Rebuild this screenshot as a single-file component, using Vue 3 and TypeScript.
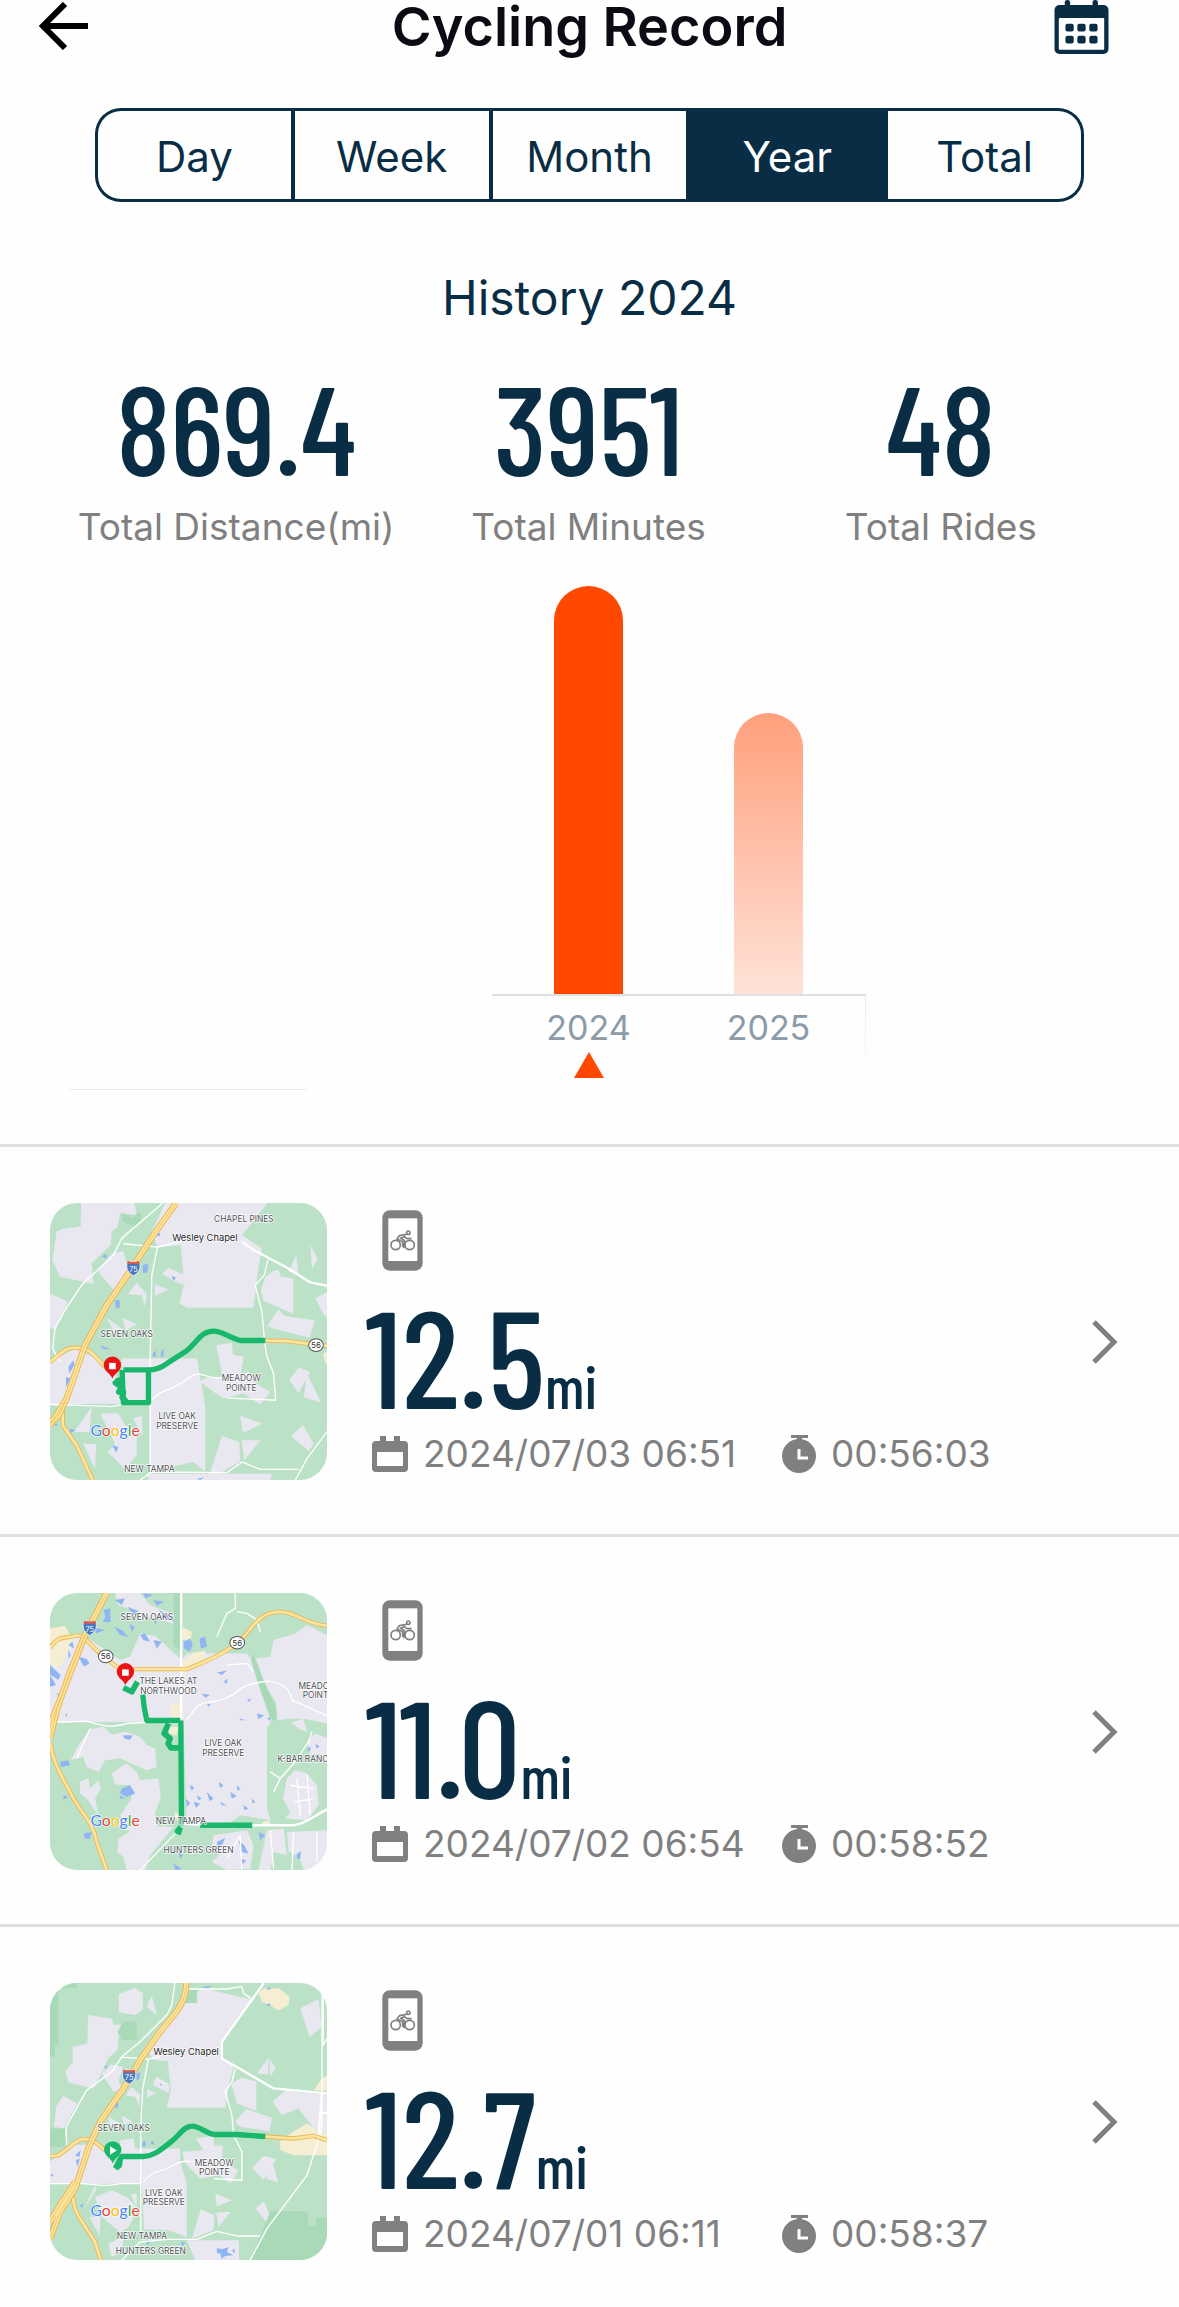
<script setup lang="ts">
import { computed, ref } from 'vue'

interface MapLabel { x: number; y: number; text: string; town?: boolean }
interface Shield { x: number; y: number; text: string }
interface RideMap {
  parks: string
  land: string
  sand: string
  water: string
  lanes: string
  streets: string
  highways: string
  interstate: string
  route: string
  routeThin: string
  interstateSign: Shield
  shields: Shield[]
  pin: { x: number; y: number; kind: 'stop' | 'start' }
  labels: MapLabel[]
}
interface Ride { id: number; miles: string; date: string; duration: string; map: RideMap }

const ranges = ['Day', 'Week', 'Month', 'Year', 'Total']
const range = ref('Year')

const years = [
  { year: 2024, distance: '869.4', minutes: 3951, rides: 48, height: 408 },
  { year: 2025, distance: '598.8', minutes: 2721, rides: 33, height: 281 },
]
const selectedYear = ref(2024)
const current = computed(() => years.find((y) => y.year === selectedYear.value) ?? years[0])
const stats = computed(() => [
  { value: current.value.distance, label: 'Total Distance(mi)' },
  { value: current.value.minutes, label: 'Total Minutes' },
  { value: current.value.rides, label: 'Total Rides' },
])

const rides: Ride[] = [
  {
    id: 1, miles: '12.5', date: '2024/07/03 06:51', duration: '00:56:03',
    map: {
      parks: 'M246 55L275 68L300 50L305 80L285 92L262 88L246 78Z',
      land: 'M123 24H283L290 60L240 55L232 95L215 110L212 150L190 170L155 205L160 267L60 245L37 195L50 110L68 102L122 94ZM375 24H682L605 120L665 160L655 215L640 338H440L418 325L432 265L422 150L352 158L335 110ZM175 230L215 175L250 168L265 225L225 290ZM30 295L84 320L45 400H30ZM367 235L385 218L432 240L430 270L400 258ZM262 298L290 262L320 298L314 335L305 300ZM344 268L386 284L344 302ZM199 368L245 400L240 412L222 410ZM247 368L292 388L256 405ZM662 285L676 245L700 228L715 225L722 245L759 250V356L670 318ZM682 392L714 342L732 362L823 375L808 428L700 400ZM746 230L768 178L774 238ZM810 150L832 190L815 222ZM825 310L861 290V368L848 355ZM30 500L105 460L190 500L230 545L265 625L30 627ZM245 490H470L480 545L495 630V830L460 800L330 828V625H252ZM252 530H318V612H262ZM528 450L575 443L578 478L610 485L602 535L625 530L640 560L690 590L660 628L610 595L548 610L480 560L500 545L548 550ZM747 555L775 518L810 530L775 593ZM800 535L842 622L790 606ZM600 662L666 685L608 713ZM605 735L661 735L612 795ZM508 838L545 722L597 740L600 798L520 845ZM752 722L788 690L820 745L806 768ZM102 710L155 635L148 710ZM180 655H235L255 690L290 700V780L255 822L203 770L225 745ZM278 668L305 662L308 724ZM130 745L168 748L165 822ZM320 835H695L690 854H325Z',
      sand: 'M848 475L861 470V510L852 495Z',
      water: 'M308 210L324 206L322 232L308 234ZM352 112L360 115L358 124L350 122ZM226 315H239V338H226ZM185 184L198 175L201 190ZM394 242L408 248L400 258ZM180 450L212 462L190 462ZM85 515L100 495L104 508L88 535ZM78 545L92 550L78 576ZM340 472L346 465L347 484H337ZM363 470L370 460V484H362ZM216 750L235 755L228 772ZM90 700L106 706L90 714ZM40 688L52 684V694ZM470 850L492 846L480 854Z',
      lanes: 'M368 24L245 130L220 180L125 270L75 345L45 400L38 460L60 500M250 146L352 156L335 240L330 500V830M352 156L425 138M683 195L672 240L645 270L665 350L673 440L680 485L700 535L706 615L560 608M335 615C370 575 395 590 440 552S500 560 550 545M30 627C110 632 170 630 215 634L255 625M300 854L335 830L560 832L605 800L660 822H775M765 854L800 790L861 708',
      streets: 'M605 140L640 165L735 215L810 262L861 272',
      highways: 'M30 500C60 480 75 455 105 458C150 455 160 480 200 520M675 436L740 438L861 452M68 625V690L110 750L158 854',
      interstate: 'M408 24L340 120L262 240L200 330L135 450L80 610L30 690M78 612L56 662L30 682',
      route: 'M675 436H600C570 428 545 408 520 408C480 408 470 445 435 470L380 505C360 520 345 524 325 524H250M325 524V622H250L246 524',
      routeThin: 'M232 548L236 560L226 563L244 575L236 590L250 592L246 606L258 618',
      interstateSign: { x: 280, y: 218, text: '75' },
      shields: [{ x: 827, y: 450, text: '56' }],
      pin: { x: 217, y: 512, kind: 'stop' },
      labels: [
        { x: 611, y: 82, text: 'CHAPEL PINES' }, { x: 494, y: 138, text: 'Wesley Chapel', town: true },
        { x: 260, y: 425, text: 'SEVEN OAKS' }, { x: 603, y: 558, text: 'MEADOW' }, { x: 603, y: 586, text: 'POINTE' },
        { x: 411, y: 672, text: 'LIVE OAK' }, { x: 411, y: 700, text: 'PRESERVE' }, { x: 328, y: 831, text: 'NEW TAMPA' },
      ],
    },
  },
  {
    id: 2, miles: '11.0', date: '2024/07/02 06:54', duration: '00:58:52',
    map: {
      parks: 'M640 205L668 280L708 370L708 410L690 400L655 300L632 225ZM400 24H425V200L400 180Z',
      land: 'M30 180L130 150L240 225L270 215L300 145L345 152L425 225L440 205H620L640 230L660 300L700 395L680 430V670L690 705L600 690L560 720H440L430 420L320 410L30 412ZM225 24H300L330 60L405 90V118L330 95L300 110L275 75L235 60ZM700 165L765 145L800 120L861 150V415L800 402L750 400L712 405L706 350L668 290L640 220L690 215ZM95 520L115 480L150 432L190 425L215 448L258 440L300 455L320 480L345 490L350 545L320 555L240 520L195 525L175 560L140 545L130 515L90 525ZM215 565L258 535L290 560L300 585L355 580L362 640L345 680L350 720L330 760L260 735L240 690L275 640L270 600L225 598ZM120 590L145 578L150 610L175 585L182 610L165 640L175 690L140 640L120 625ZM235 760L300 720L400 725L330 810L315 854H260L250 815L232 800ZM520 750L620 735L640 780L630 850L560 854L515 830L545 800L515 785ZM680 735L730 730L740 810L700 800L690 854H655ZM740 740L861 735V854H790L775 810L745 800ZM728 640L740 580L765 555L800 565L830 600L835 660L800 705L735 700L750 680ZM800 470L825 445L861 460V530L835 505L810 510ZM752 412L790 402L800 440L775 430Z',
      sand: 'M30 130L75 122L98 165L65 240L45 250L30 235ZM428 127L455 140L452 165H426ZM425 235L460 202L497 198L490 225L425 270ZM392 355L425 352V400L388 395ZM385 425H418L408 452L388 445ZM405 680L425 690L415 705L402 700ZM665 710L690 705L686 722L668 720Z',
      water: 'M190 75L210 70L212 112L188 110L196 95ZM165 128L195 135L168 145ZM225 45L255 40L245 60ZM262 65L295 78L290 95L275 85ZM310 25L340 30L315 40ZM340 45L372 50L350 62ZM355 75L390 90L405 110L380 102ZM340 100L352 105L345 118ZM222 125L245 135L265 155L240 150ZM268 118L285 125L275 140ZM300 150L315 145L330 170L310 165ZM340 165L365 170L350 190ZM430 170L450 160L458 180L448 200L432 190ZM478 160L495 155L500 185L482 190ZM115 215L140 222L148 235L132 244ZM85 180L97 170L102 190ZM30 240L62 270L55 285L30 268ZM30 270L48 300L30 305ZM50 325L75 330L60 342ZM75 390L82 385L80 395ZM85 195L92 210L85 222ZM250 450L278 450L270 464L252 460ZM60 530L85 525L90 540L62 545ZM245 610L270 600L285 625L260 635L240 625ZM238 630L258 640L240 640ZM70 630L85 636L70 642ZM130 745L155 740L150 760H135ZM530 262L560 256L545 270ZM550 290L562 280L560 296ZM485 325L510 330L495 338ZM598 400L618 405H600ZM650 385L672 390L655 402ZM680 400L690 396V408ZM500 355L512 358L505 365ZM620 345L632 340L628 350ZM448 600L462 605L455 618ZM500 620L520 640L508 648ZM535 590L550 600L540 608ZM570 620L590 632L575 640ZM590 600L600 610L592 618ZM460 650L480 655L468 668ZM635 640L645 650L636 655ZM540 650L560 660H545ZM470 630L485 640L475 645ZM438 640L450 655L440 665ZM610 660L625 670L612 675ZM530 770L555 758L545 780L532 785ZM595 765L612 780L625 805L605 800ZM655 740L675 750L660 765ZM600 820L618 825L605 840ZM770 805L782 798L780 820H770ZM415 800L428 810L420 820ZM800 490L812 485L808 500ZM825 475L838 485L828 490ZM400 835L425 850L405 854Z',
      lanes: 'M584 24L586 70L560 85L545 120L530 155M590 80L620 85L650 105L660 140M30 412L140 408C200 428 220 425 260 415L400 407M440 404C460 385 460 360 500 352C540 350 560 338 580 328C620 290 650 295 680 288C720 290 750 310 755 345L790 360L861 392M300 854L420 730M700 620L720 580L690 560M720 580L760 535L805 470L815 440M150 430L110 520M560 240L620 235L640 260M750 600L820 610M760 650L820 640M770 580L780 690M800 570L810 690M560 820L600 750L605 854M690 735L700 850M760 740L755 854M830 740V830',
      streets: 'M423 24V400M425 715L520 720H760C800 715 820 690 861 672',
      highways: 'M30 190C50 150 80 160 105 152C130 145 150 180 180 205L235 250M280 252H440C500 230 540 210 585 180C620 155 640 105 680 88C750 60 790 120 861 122M30 470C40 540 70 580 95 630C120 680 160 710 170 770L200 854',
      interstate: 'M200 24L135 150L90 260L52 370L30 460M135 150L42 390L30 420',
      route: 'M308 328L312 365L320 406H420M422 406L424 720M480 720H636',
      routeThin: 'M250 308L275 320L292 290M385 415L372 445L390 460L384 475L392 488L420 488M422 725L412 738L424 742',
      interstateSign: { x: 149, y: 127, text: '75' },
      shields: [{ x: 197, y: 214, text: '56' }, { x: 591, y: 173, text: '56' }],
      pin: { x: 256, y: 262, kind: 'stop' },
      labels: [
        { x: 320, y: 104, text: 'SEVEN OAKS' }, { x: 385, y: 298, text: 'THE LAKES AT' }, { x: 385, y: 326, text: 'NORTHWOOD' },
        { x: 833, y: 312, text: 'MEADOW' }, { x: 833, y: 339, text: 'POINTE' }, { x: 549, y: 483, text: 'LIVE OAK' },
        { x: 549, y: 511, text: 'PRESERVE' }, { x: 797, y: 531, text: 'K-BAR RANCH' }, { x: 422, y: 715, text: 'NEW TAMPA' },
        { x: 475, y: 804, text: 'HUNTERS GREEN' },
      ],
    },
  },
  {
    id: 3, miles: '12.7', date: '2024/07/01 06:11', duration: '00:58:37',
    map: {
      parks: 'M30 24H110V40H55V210H45V245H30ZM30 460H75V515H30ZM690 708H804V750H827V728H861V854H630ZM435 45H470V84H435ZM250 140H290V195H245L232 170Z',
      land: 'M144 120L215 130L220 148L270 150L272 178L235 185L232 225L205 248L190 285L160 340L85 322L76 290L98 262V215L142 205ZM236 58L285 38L308 55V105L285 120L236 112ZM320 95L335 62L350 120ZM430 84H470V50L490 40L640 75L655 55L545 195L540 245L580 275L565 330L556 398H380L392 345L383 258L340 255L315 215L360 160L410 115ZM780 100L835 72L843 155L808 186ZM185 295L212 268L248 275L235 320L250 340L220 350ZM340 320L350 305L388 328L386 354L340 330ZM258 362L272 335L300 358L298 395L285 365ZM320 343L347 353L322 367ZM48 395L70 362L112 385L70 460L42 455ZM205 425L240 445L210 452ZM245 422L278 438L252 448ZM573 325L605 307L648 320V407L590 385ZM585 440L617 402L695 428L688 468L600 455ZM650 295L685 248L684 298ZM688 250L706 280L690 305ZM697 380L735 345L780 352L861 358V475L820 460L775 400L725 420ZM85 512L175 505L240 590L290 625L30 627V560ZM240 495L280 490L285 520H420V560L440 625V785L385 765L312 762L305 625H240ZM468 490L520 482L522 510L548 512L545 560L595 585L570 625L540 600L480 610L432 560L428 530L490 525ZM635 578L670 542L708 552L670 614ZM695 555L714 622L678 610ZM525 655L574 675L530 694ZM528 712L570 710L535 755ZM455 790L482 702L522 720L520 765ZM645 700L672 679L693 735L680 742ZM132 700L165 632L168 645ZM165 665L215 645L260 665L285 690L290 710L265 755L240 770L185 725ZM272 658L290 655V695ZM148 725H182L178 780ZM205 805L255 780L240 830L215 845ZM440 795H596V854H465Z',
      sand: 'M672 40L715 40L748 65L745 90L715 106L690 92L665 80L655 55ZM718 500L750 475L800 445L830 465L861 475V540H760L720 525ZM845 310L861 300V348L820 345Z',
      water: 'M485 35L515 33L500 42ZM680 38L695 40L682 45ZM675 90L690 85V93ZM288 295L300 292L298 312L290 316ZM225 378L234 375V397H224ZM192 275L200 270L201 282ZM105 540L122 525L118 545ZM108 555L120 550L112 575ZM308 500L316 495V514H306ZM330 503L340 497L342 510ZM118 690L132 685L125 698ZM30 600L42 595L38 604ZM530 818L545 822L565 815L560 830L580 840L555 842L545 850L540 835L530 832ZM575 825L584 820L583 835ZM420 802L436 800L428 812ZM318 795L330 800L322 810ZM358 325L366 328L362 333Z',
      lanes: 'M404 24L395 90L380 120L300 200L245 245L215 290L140 345L78 455L80 510M245 246L325 252L308 340L302 450V790M325 252L360 245M435 42H560L605 34L610 55L640 75M585 280L575 320L555 350L575 420L580 480L605 530V615L520 610M30 625H130C190 632 210 632 240 625H300M310 620C340 580 360 595 400 570S460 570 500 555M245 854L300 800L380 792H470L530 768L590 782H660M630 854L680 760L770 640L800 600L845 460V24M850 24L848 210L861 190',
      streets: 'M671 24L545 200V250L640 305L700 340L861 355M845 355L835 480M845 413H861',
      highways: 'M30 542H50C80 530 100 495 130 492C160 490 170 505 195 525M675 484L760 490L820 482L861 495M98 640C95 690 110 720 130 745L165 800L182 854',
      interstate: 'M438 24C438 90 400 120 360 170L300 255L250 340L180 440L145 520L105 640L60 710L30 790M105 620L60 690L30 740',
      route: 'M675 484L590 478H520C495 472 475 452 455 453C430 453 420 480 390 502C360 525 340 543 310 544H245L226 580',
      routeThin: 'M225 578L238 570L240 550',
      interstateSign: { x: 267, y: 303, text: '75' },
      shields: [],
      pin: { x: 218, y: 526, kind: 'start' },
      labels: [
        { x: 438, y: 241, text: 'Wesley Chapel', town: true }, { x: 251, y: 468, text: 'SEVEN OAKS' },
        { x: 522, y: 571, text: 'MEADOW' }, { x: 522, y: 598, text: 'POINTE' }, { x: 371, y: 662, text: 'LIVE OAK' },
        { x: 371, y: 690, text: 'PRESERVE' }, { x: 305, y: 790, text: 'NEW TAMPA' }, { x: 332, y: 837, text: 'HUNTERS GREEN' },
      ],
    },
  },
]
</script>

<template>
  <main class="page">
    <header class="topbar">
      <button class="icon-button" type="button" aria-label="Back">
        <svg class="back" viewBox="0 0 50 48" aria-hidden="true">
          <path d="M26 2L4 24L26 46M5 24H49" fill="none" stroke="#000" stroke-width="6" />
        </svg>
      </button>
      <h1>Cycling Record</h1>
      <button class="icon-button" type="button" aria-label="Calendar">
        <svg class="calendar" viewBox="70 0 165 163" aria-hidden="true">
          <rect x="71" y="15" width="163" height="148" rx="15" fill="#082d45" />
          <rect x="102" y="0" width="16" height="26" rx="7" fill="#082d45" />
          <rect x="186" y="0" width="16" height="26" rx="7" fill="#082d45" />
          <rect x="84" y="54" width="137" height="96" rx="3" fill="#fff" />
          <g fill="#082d45">
            <rect v-for="i in 6" :key="i" :x="104 + ((i - 1) % 3) * 36" :y="i > 3 ? 108 : 72" width="25" height="23" rx="6" />
          </g>
        </svg>
      </button>
    </header>

    <div class="tabs" role="group" aria-label="Period">
      <button v-for="name in ranges" :key="name" type="button" :class="{ active: name === range }" :aria-pressed="name === range" @click="range = name">{{ name }}</button>
    </div>

    <h2>History {{ selectedYear }}</h2>

    <dl class="stats">
      <div v-for="stat in stats" :key="stat.label">
        <dd>{{ stat.value }}</dd>
        <dt>{{ stat.label }}</dt>
      </div>
    </dl>

    <section class="chart" aria-label="Distance by year">
      <div class="plot">
        <div v-for="y in years" :key="y.year" class="slot">
          <div class="bar" :class="{ active: y.year === selectedYear }" :style="{ height: y.height + 'px' }"></div>
        </div>
      </div>
      <div class="axis">
        <button v-for="y in years" :key="y.year" type="button" class="slot" @click="selectedYear = y.year">
          <span>{{ y.year }}</span>
          <svg v-if="y.year === selectedYear" class="marker" viewBox="0 0 30 26" aria-hidden="true"><path d="M15 0L30 26H0Z" fill="#ff4900" /></svg>
        </button>
      </div>
    </section>
    <div class="hint"></div>

    <ul class="rides">
      <li v-for="ride in rides" :key="ride.id">
        <a href="#">
          <svg class="map" viewBox="30 24 830 830" role="img" aria-label="Route map">
            <rect x="30" y="24" width="830" height="830" fill="#bbe2c7" />
            <path :d="ride.map.land" fill="#e9e8f0" />
            <path :d="ride.map.parks" fill="#a9dab8" />
            <path :d="ride.map.sand" fill="#f5eed2" />
            <path :d="ride.map.water" fill="#90b5f3" />
            <g fill="none" stroke-linejoin="round">
              <path :d="ride.map.lanes" stroke="#fff" stroke-width="4" />
              <path :d="ride.map.streets" stroke="#fff" stroke-width="7" />
              <path :d="ride.map.highways" stroke="#eeb355" stroke-width="13" />
              <path :d="ride.map.highways" stroke="#fbe69d" stroke-width="8" />
              <path :d="ride.map.interstate" stroke="#eeb355" stroke-width="19" />
              <path :d="ride.map.interstate" stroke="#fbe69d" stroke-width="13" />
              <path :d="ride.map.interstate" stroke="#eeb355" stroke-width="2" />
              <path :d="ride.map.route" stroke="#19b76b" stroke-width="16" />
              <path :d="ride.map.routeThin" stroke="#19b76b" stroke-width="17" />
            </g>
            <g :transform="`translate(${ride.map.interstateSign.x} ${ride.map.interstateSign.y})`">
              <path d="M-17 -20Q0 -15 17 -20Q28 10 0 24Q-28 10 -17 -20Z" fill="#4777bd" stroke="#fff" stroke-width="2" />
              <path d="M-17 -20Q0 -15 17 -20L19 -11H-19Z" fill="#d95b50" />
              <text class="sign light" y="13">{{ ride.map.interstateSign.text }}</text>
            </g>
            <g v-for="(s, i) in ride.map.shields" :key="i" :transform="`translate(${s.x} ${s.y})`">
              <ellipse rx="22" ry="19" fill="#fff" stroke="#555" stroke-width="3" />
              <text class="sign" y="9">{{ s.text }}</text>
            </g>
            <text v-for="l in ride.map.labels" :key="l.text" :class="l.town ? 'town' : 'place'" :x="l.x" :y="l.y">{{ l.text }}</text>
            <text class="google" x="151" y="721"><tspan fill="#4285f4">G</tspan><tspan fill="#ea4335">o</tspan><tspan fill="#fbbc05">o</tspan><tspan fill="#4285f4">g</tspan><tspan fill="#34a853">l</tspan><tspan fill="#ea4335">e</tspan></text>
            <g :transform="`translate(${ride.map.pin.x} ${ride.map.pin.y})`">
              <path d="M0 38C-6 22 -26 16 -26 -2A26 26 0 0 1 26 -2C26 16 6 22 0 38Z" :fill="ride.map.pin.kind === 'stop' ? '#ea1414' : '#19b76b'" />
              <rect v-if="ride.map.pin.kind === 'stop'" x="-10" y="-9" width="20" height="19" fill="#fff" />
              <path v-else d="M-8 -13L12 0L-8 13Z" fill="#fff" />
            </g>
          </svg>

          <div class="info">
            <svg class="device" viewBox="66 30 123 183" aria-hidden="true">
              <rect x="67" y="31" width="121" height="181" rx="22" fill="#808080" />
              <rect x="85" y="55" width="87" height="128" fill="#fff" />
              <g fill="none" stroke="#808080" stroke-width="5" stroke-linejoin="round">
                <circle cx="107" cy="135" r="14" />
                <circle cx="149" cy="135" r="14" />
                <circle cx="145" cy="98" r="5" />
                <path d="M140 103L118 107L111 117L128 125V138L132 142L134 122L122 115L133 110L141 116H155" />
              </g>
            </svg>
            <p class="miles"><strong>{{ ride.miles }}</strong><span>mi</span></p>
            <div class="meta">
              <span class="when">
                <svg class="date-icon" viewBox="0 0 36 36" aria-hidden="true">
                  <path d="M8 0h6v5h8V0h6v5h4q4 0 4 4v23q0 4 -4 4H4q-4 0 -4 -4V9q0 -4 4 -4h4ZM5 16v14h26V16Z" fill="#808080" fill-rule="evenodd" />
                </svg>
                <time>{{ ride.date }}</time>
              </span>
              <span class="time">
                <svg class="watch-icon" viewBox="0 0 34 38" aria-hidden="true">
                  <path d="M9 0H26V3H20V6H15V3H9Z" fill="#808080" />
                  <circle cx="17" cy="21" r="17" fill="#808080" />
                  <path d="M17 14V23H26" fill="none" stroke="#fff" stroke-width="3" />
                </svg>
                <time>{{ ride.duration }}</time>
              </span>
            </div>
          </div>

          <svg class="chevron" viewBox="0 0 26 44" aria-hidden="true">
            <path d="M2 2L22 22L2 42" fill="none" stroke="#808080" stroke-width="5" />
          </svg>
        </a>
      </li>
    </ul>
  </main>
</template>

<style>
body {
  background: #fefefe;
}
</style>

<style scoped>
.page {
  font-family: Inter, Roboto, sans-serif;
  color: #082d45;
}
button {
  margin: 0;
  padding: 0;
  border: 0;
  background: none;
  font: inherit;
  color: inherit;
  cursor: pointer;
}
svg {
  display: block;
  flex: none;
}
.topbar {
  display: flex;
  justify-content: space-between;
  height: 54px;
  padding: 0 70px 0 39px;
}
.icon-button {
  display: flex;
  flex: 1;
}
.icon-button:last-child {
  justify-content: flex-end;
}
.back {
  width: 50px;
  height: 48px;
  margin-top: 2px;
}
.calendar {
  width: 55px;
  height: 54px;
}
h1 {
  margin: 0 0 0 31px;
  font-size: 54px;
  line-height: 54px;
  font-weight: 600;
  color: #0b0b14;
}
.tabs {
  display: flex;
  height: 94px;
  margin: 54px 95px 0;
}
.tabs button {
  box-sizing: border-box;
  width: 20%;
  padding-top: 2px;
  font-size: 42px;
  border: 3px solid #082d45;
  border-width: 3px 2px;
}
.tabs button:first-child {
  border-left-width: 3px;
  border-radius: 26px 0 0 26px;
}
.tabs button:last-child {
  border-right-width: 3px;
  border-radius: 0 26px 26px 0;
}
.tabs .active {
  background: #082d45;
  color: #fff;
}
h2 {
  margin: 67px 0 0;
  text-align: center;
  font-size: 48px;
  line-height: 58px;
  font-weight: 400;
}
.stats {
  display: flex;
  margin: 49px 62px 0 60px;
}
.stats div {
  display: flex;
  flex: 1 1 0;
  flex-direction: column;
  text-align: center;
}
.stats dd {
  margin: 0;
  font-family: 'Barlow Condensed', 'Roboto Condensed', sans-serif;
  font-size: 126px;
  line-height: 100px;
  font-weight: 500;
}
.stats dt {
  margin-top: 29px;
  font-size: 37px;
  line-height: 44px;
  color: #808080;
}
.chart {
  width: 374px;
  margin-left: calc(50% - 98px);
}
.plot {
  display: flex;
  align-items: flex-end;
  height: 445px;
  padding-left: 7px;
  border-bottom: 2px solid #dfdfe1;
}
.slot {
  display: flex;
  flex-direction: column;
  align-items: center;
  width: 180px;
}
.bar {
  width: 69px;
  border-radius: 35px 35px 0 0;
  background: linear-gradient(#ffa07c, #ffe2d8);
}
.bar.active {
  background: #ff4900;
}
.axis {
  display: flex;
  align-items: flex-start;
  height: 82px;
  padding-left: 7px;
  background: linear-gradient(#ececee, #f6f6f6) right top / 1px 60px no-repeat;
}
.axis span {
  margin-top: 12px;
  font-size: 34px;
  line-height: 40px;
  color: #8b9ba8;
}
.marker {
  width: 30px;
  height: 26px;
  margin-top: 4px;
}
.hint {
  width: 237px;
  height: 1px;
  margin: 11px 0 54px 70px;
  background: #e9e9e9;
}
.rides {
  margin: 0;
  padding: 0;
  list-style: none;
}
.rides a {
  display: flex;
  padding: 56px 61px 54px 50px;
  border-top: 3px solid #e0e0e0;
  color: inherit;
  text-decoration: none;
}
.rides li:last-child a {
  padding-bottom: 46px;
}
.map {
  width: 277px;
  height: 277px;
  border-radius: 27px;
}
.map text {
  text-anchor: middle;
  paint-order: stroke;
  stroke: #fff;
  stroke-width: 4px;
  stroke-linejoin: round;
}
.map .place {
  font-size: 25px;
  fill: #4c5054;
}
.map .town {
  font-size: 28px;
  fill: #202124;
}
.map .sign {
  font-size: 24px;
  fill: #333;
  stroke: none;
}
.map .light {
  font-size: 22px;
  fill: #fff;
}
.map .google {
  text-anchor: start;
  font-family: Lato, sans-serif;
  font-size: 47px;
}
.info {
  flex: 1;
  margin-left: 38px;
}
.device {
  width: 41px;
  height: 61px;
  margin: 7px 0 28px 17px;
}
.miles {
  display: flex;
  align-items: baseline;
  margin: 0;
  font-family: 'Barlow Condensed', 'Roboto Condensed', sans-serif;
}
.miles strong {
  font-size: 138px;
  line-height: 110px;
  font-weight: 500;
}
.miles span {
  font-size: 60px;
  line-height: 48px;
  font-weight: 500;
}
.meta {
  display: flex;
  margin: 22px 0 0 7px;
  font-size: 37px;
  line-height: 46px;
  color: #808080;
}
.when,
.time {
  display: flex;
  align-items: center;
  gap: 15px;
}
.when {
  width: 410px;
}
.date-icon {
  width: 36px;
  height: 36px;
}
.watch-icon {
  width: 34px;
  height: 38px;
}
.chevron {
  align-self: center;
  width: 26px;
  height: 44px;
}
</style>
